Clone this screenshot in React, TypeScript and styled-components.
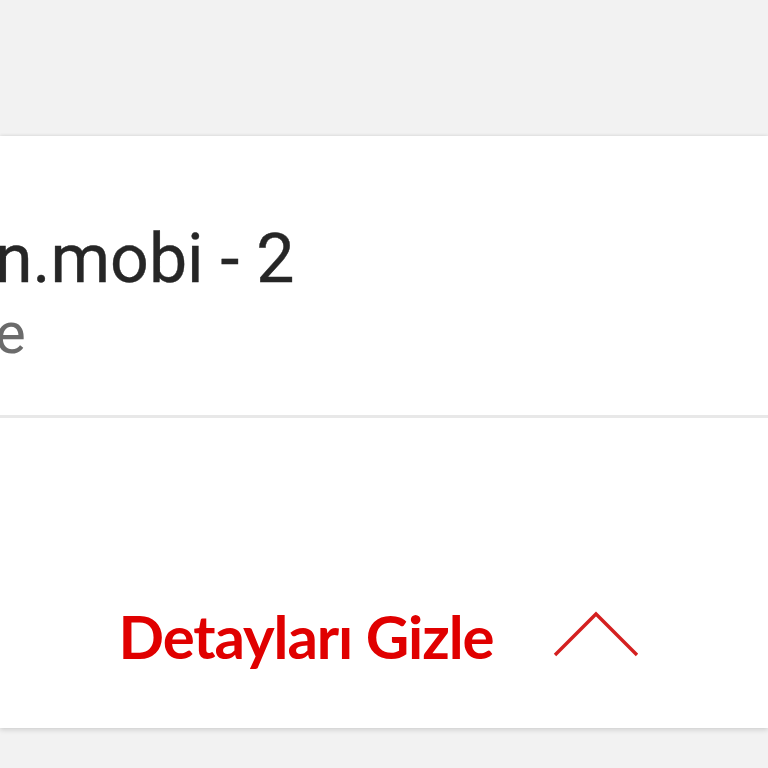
import styled, { createGlobalStyle } from "styled-components";

const GlobalStyle = createGlobalStyle`
  html, body {
    margin: 0;
    padding: 0;
    background: #f2f2f2;
  }
  #root {
    min-height: 100vh;
  }
`;

export default function App() {
    return (
        <>
            <GlobalStyle />
            <Page>
                <Card>
                    <Header>
                        <Title>n.mobi - 2</Title>
                        <Subtitle>e</Subtitle>
                    </Header>
                    <Details>
                        <ToggleButton type="button">
                            <ToggleLabel>Detayları Gizle</ToggleLabel>
                            <ChevronUp viewBox="0 0 86 46">
                                <polyline points="2,44 43,3 84,44" />
                            </ChevronUp>
                        </ToggleButton>
                    </Details>
                </Card>
            </Page>
        </>
    );
}

/* === STYLES === */

const Page = styled.div`
  min-height: 100vh;
  padding-top: 136px;
  box-sizing: border-box;
  background: #f2f2f2;
  overflow: hidden;
`;

const Card = styled.div`
  background: #fff;
  box-shadow: 0 2px 5px rgba(0, 0, 0, 0.14), 0 -1px 3px rgba(0, 0, 0, 0.06);
`;

const Header = styled.div`
  height: 282px;
  box-sizing: border-box;
  padding-top: 83px;
  border-bottom: 3px solid #e8e8e8;
  font-family: Roboto, "Liberation Sans", sans-serif;
`;

const Title = styled.div`
  font-size: 68px;
  line-height: 80px;
  color: #262626;
  text-indent: -5px;
  white-space: nowrap;
  -webkit-text-stroke: 0.4px #262626;
`;

const Subtitle = styled.div`
  font-size: 58px;
  line-height: 68px;
  color: #6b6b6b;
  text-indent: -5px;
`;

const Details = styled.div`
  height: 310px;
  box-sizing: border-box;
  padding-top: 182px;
  display: flex;
  justify-content: center;
`;

const ToggleButton = styled.button`
  display: flex;
  align-items: center;
  gap: 60px;
  background: none;
  border: none;
  padding: 0;
  margin-left: -10px;
  cursor: pointer;
  height: 72px;
`;

const ToggleLabel = styled.span`
  font-family: Lato, "Liberation Sans", sans-serif;
  font-weight: 700;
  font-size: 60px;
  line-height: 72px;
  color: #e00000;
  letter-spacing: -1.1px;
`;

const ChevronUp = styled.svg`
  width: 86px;
  height: 46px;
  margin-top: -4px;
  fill: none;
  stroke: #d42020;
  stroke-width: 3.4;
`;
